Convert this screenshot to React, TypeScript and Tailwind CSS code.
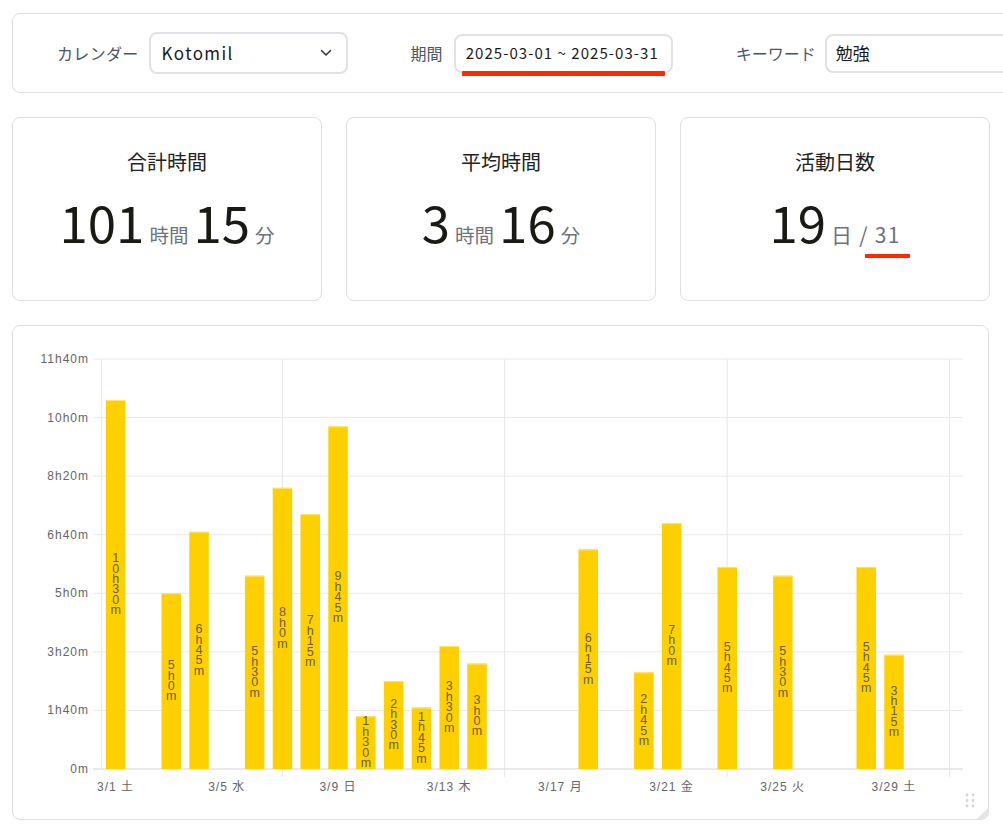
import React from "react";

const FONT = '"Noto Sans CJK JP", "Noto Sans", sans-serif';
const CHART_FONT = '"Liberation Sans", "Noto Sans CJK JP", sans-serif';

const data: Record<number, number> = {
  0: 630, 2: 300, 3: 405, 5: 330, 6: 480, 7: 435, 8: 585, 9: 90, 10: 150,
  11: 105, 12: 210, 13: 180, 17: 375, 19: 165, 20: 420, 22: 345, 24: 330,
  27: 345, 28: 195,
};

const X0 = 101.6;
const STEP = 27.8;
const Y0 = 769;
const PX_PER_MIN = 410 / 700;

function fmt(m: number) {
  return `${Math.floor(m / 60)}h${m % 60}m`;
}

const dow = ["土", "日", "月", "火", "水", "木", "金"];

function Chart() {
  const yTicks = [0, 100, 200, 300, 400, 500, 600, 700];
  const vGrid = [6, 14, 22, 30];
  const xLabels = [0, 4, 8, 12, 16, 20, 24, 28];
  return (
    <svg width={975} height={493} className="block" style={{ fontFamily: CHART_FONT }}>
      <g transform="translate(-13,-326)">
        {yTicks.map((v) => {
          const y = Y0 - v * PX_PER_MIN;
          return (
            <g key={v}>
              <line x1={93} x2={963} y1={y} y2={y} stroke="#e8e8e8" strokeWidth={1} />
              <text x={89} y={y + 4} textAnchor="end" fontSize={12} fill="#666" letterSpacing={1}>
                {v === 0 ? "0m" : fmt(v)}
              </text>
            </g>
          );
        })}
        <line x1={X0} x2={X0} y1={359} y2={769} stroke="#e8e8e8" strokeWidth={1} />
        {vGrid.map((i) => {
          const x = X0 + STEP * (i + 0.5);
          return <line key={i} x1={x} x2={x} y1={359} y2={777} stroke="#e6e6e6" strokeWidth={1} />;
        })}
        <line x1={93} x2={963} y1={Y0} y2={Y0} stroke="#e0e0e0" strokeWidth={1} />
        {Object.entries(data).map(([k, v]) => {
          const i = Number(k);
          const x = X0 + STEP * i + 4.3;
          const h = v * PX_PER_MIN;
          const top = Y0 - h;
          const cx = x + 9.75;
          const label = fmt(v).split("");
          const mid = top + h / 2;
          const start = mid - (label.length * 10.4) / 2 + 8.8;
          return (
            <g key={k}>
              <rect x={x} y={top} width={19.5} height={h} fill="#ffd000" />
              <rect x={x} y={top} width={19.5} height={1} fill="#ffe56a" />
              {label.map((c, j) => (
                <text key={j} x={cx} y={start + j * 10.4} textAnchor="middle" fontSize={12.5} fill="#6b5f2a">
                  {c}
                </text>
              ))}
            </g>
          );
        })}
        {xLabels.map((i) => {
          const x = X0 + STEP * (i + 0.5);
          return (
            <text key={i} x={x} y={791} textAnchor="middle" fontSize={12} fill="#666" letterSpacing={1}>
              {`3/${i + 1} ${dow[i % 7]}`}
            </text>
          );
        })}
        {[967, 973].map((x) =>
          [795, 800.5, 806].map((y) => <circle key={`${x}-${y}`} cx={x} cy={y} r={1.4} fill="#d4d4d4" />)
        )}
        <path d="M977 819 L988 808 L988 819 Z" fill="#e4e4e4" />
      </g>
    </svg>
  );
}

function StatCard({ title, children }: { title: string; children: React.ReactNode }) {
  return (
    <div className="w-[310px] h-[184px] rounded-[8px] border border-[#dedee3] bg-white flex flex-col items-center pt-[30px]">
      <div className="text-[20px] leading-[28px] text-[#222]">{title}</div>
      <div className="mt-[20px] flex items-baseline gap-[5px]">{children}</div>
    </div>
  );
}

const Big = ({ children }: { children: React.ReactNode }) => (
  <span className="text-[51px] leading-none text-[#1a1a14]">{children}</span>
);
const Small = ({ children }: { children: React.ReactNode }) => (
  <span className="text-[19.5px] leading-none text-[#6b7280]">{children}</span>
);

export default function App() {
  return (
    <div className="w-[1003px] h-[835px] overflow-hidden bg-white" style={{ fontFamily: FONT }}>
      <div className="pl-[12px] pt-[13px]">
        <div className="w-[1010px] h-[80px] rounded-[8px] border border-[#dedee3] flex items-center pl-[44px] whitespace-nowrap">
          <span className="shrink-0 text-[16px] text-[#4b5563] tracking-[0.02em]">カレンダー</span>
          <div className="shrink-0 ml-[10px] w-[199px] h-[42px] rounded-[8px] border-2 border-[#e1e1e8] flex items-center justify-between pl-[11px] pr-[14px]">
            <span className="text-[17px] text-[#1a1a1a] tracking-[0.08em]">Kotomil</span>
            <svg width="12" height="8" viewBox="0 0 12 8">
              <path d="M1.5 1.5 L6 6 L10.5 1.5" fill="none" stroke="#333" strokeWidth="1.5" strokeLinecap="round" strokeLinejoin="round" />
            </svg>
          </div>
          <span className="shrink-0 ml-[63px] text-[16px] text-[#4b5563]">期間</span>
          <div className="shrink-0 relative ml-[11px] w-[219px] h-[39px] rounded-[8px] border-2 border-[#e1e1e8] flex items-center pl-[10px]">
            <span className="text-[15px] text-[#1a1a1a] tracking-[0.07em]">2025-03-01 ~ 2025-03-31</span>
            <div className="absolute left-[6px] top-[35px] w-[203px] h-[5px] bg-[#ff2a00] blur-[0.6px] rounded-[1px]" />
          </div>
          <span className="shrink-0 ml-[63px] text-[16px] text-[#4b5563]">キーワード</span>
          <div className="shrink-0 ml-[9px] w-[200px] h-[39px] rounded-[8px] border-2 border-[#e1e1e8] flex items-center pl-[9px]">
            <span className="text-[17px] text-[#1a1a1a]">勉強</span>
          </div>
        </div>

        <div className="mt-[24px] flex gap-[24px] w-[978px]">
          <StatCard title="合計時間">
            <Big>101</Big>
            <Small>時間</Small>
            <Big>15</Big>
            <Small>分</Small>
          </StatCard>
          <StatCard title="平均時間">
            <Big>3</Big>
            <Small>時間</Small>
            <Big>16</Big>
            <Small>分</Small>
          </StatCard>
          <StatCard title="活動日数">
            <Big>19</Big>
            <span className="relative text-[21px] leading-none text-[#6b7280] tracking-[0.06em] whitespace-nowrap">
              日 / 31
              <span className="absolute left-[34px] top-[30px] w-[45px] h-[4px] bg-[#ff2a00] blur-[0.6px]" />
            </span>
          </StatCard>
        </div>

        <div className="mt-[24px] w-[977px] h-[495px] rounded-[8px] border border-[#dedee3] bg-white overflow-hidden">
          <Chart />
        </div>
      </div>
    </div>
  );
}
